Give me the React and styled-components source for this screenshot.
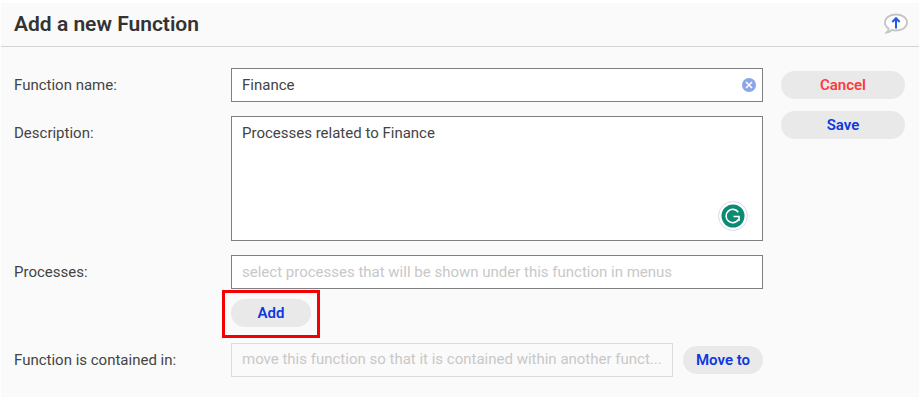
import React from "react";
import styled, { createGlobalStyle } from "styled-components";

const Global = createGlobalStyle`
  html, body { margin: 0; padding: 0; background: #fff; }
  body { font-family: Roboto, "Liberation Sans", sans-serif; }
  * { box-sizing: border-box; }
`;

const Panel = styled.div`
  margin: 3px 2px 0 1px;
  width: 918px;
  height: 394px;
  background: #fafafa;
`;

const Header = styled.header`
  height: 44px;
  padding: 0 10px 2px 13px;
  display: flex;
  align-items: center;
  justify-content: space-between;
  border-bottom: 1px solid #d4d4d4;
`;

const Title = styled.h1`
  margin: 0;
  font-size: 21px;
  line-height: 24px;
  font-weight: 600;
  color: #333;
`;

const Body = styled.div`
  padding: 21px 13px 0 13px;
  display: grid;
  grid-template-columns: 217px 532px 142px;
  align-items: start;
`;

const Label = styled.label`
  font-size: 15px;
  line-height: 18px;
  color: #444;
  padding-top: 8px;
`;

const Field = styled.div`
  position: relative;
  margin-bottom: 14px;
`;

const Input = styled.div`
  height: ${(p) => p.$h ?? 34}px;
  width: ${(p) => p.$w ?? "100%"};
  padding: ${(p) => p.$pad ?? 7}px 10px 0;
  background: ${(p) => (p.$disabled ? "#fafafa" : "#fff")};
  border: 1px solid ${(p) => (p.$disabled ? "#dcdcdc" : "#808080")};
  font-size: 15px;
  line-height: 18px;
  color: ${(p) => (p.$placeholder ? "#c8c8c8" : "#444")};
  white-space: nowrap;
  overflow: hidden;
`;

const ClearIcon = styled.svg`
  position: absolute;
  right: 6px;
  top: 9px;
  width: 16px;
  height: 16px;
`;

const GrammarlyIcon = styled.svg`
  position: absolute;
  right: 15px;
  bottom: 10px;
  width: 30px;
  height: 30px;
`;

const Actions = styled.div`
  grid-row: span 2;
  padding: 3px 0 0 18px;
  display: flex;
  flex-direction: column;
  gap: 12px;
`;

const Pill = styled.button`
  width: ${(p) => p.$w}px;
  height: 28px;
  flex: none;
  border: 0;
  padding: 0;
  border-radius: 14px;
  background: #e9e9e9;
  font-family: inherit;
  font-size: 15px;
  font-weight: 600;
  color: ${(p) => (p.$danger ? "#fb3a3f" : "#0f37e0")};
`;

const AddRow = styled.div`
  position: relative;
  width: 80px;
  height: 28px;
  margin: 10px 0 16px;
`;

const Highlight = styled.div`
  position: absolute;
  left: -9px;
  top: -9px;
  width: 98px;
  height: 48px;
  border: 3px solid #f40000;
`;

const MoveRow = styled.div`
  display: flex;
  align-items: center;
  gap: 10px;
`;

export default function App() {
  return (
    <>
      <Global />
      <Panel>
        <Header>
          <Title>Add a new Function</Title>
          <svg width="26" height="22" viewBox="0 0 26 22" fill="none">
            <path
              d="M13 1.500c6.300 0 11 3.500 11 8s-4.700 8-11 8c-1.500 0-3-.2-4.200-.6-1 1.200-2.600 2.300-5 2.600 1.200-1.100 1.800-2.400 1.900-4C3.200 14 2 11.900 2 9.500c0-4.500 4.700-8 11-8z"
              stroke="#c4c4c4"
              strokeWidth="1.800"
              fill="#fff"
            />
            <path d="M13 15.500V5.500M9.300 9l3.700-3.800 3.700 3.800" stroke="#1f5ce0" strokeWidth="2" />
          </svg>
        </Header>
        <Body>
          <Label>Function name:</Label>
          <Field>
            <Input>Finance</Input>
            <ClearIcon viewBox="0 0 16 16">
              <circle cx="8" cy="8" r="7" fill="#8aa5ec" />
              <path d="M5 5l6 6M11 5l-6 6" stroke="#fff" strokeWidth="1.600" />
            </ClearIcon>
          </Field>
          <Actions>
            <Pill $w={124} $danger>Cancel</Pill>
            <Pill $w={124}>Save</Pill>
          </Actions>
          <Label>Description:</Label>
          <Field>
            <Input $h={125}>Processes related to Finance</Input>
            <GrammarlyIcon viewBox="0 0 30 30">
              <circle cx="15" cy="15" r="14.500" fill="#fff" stroke="#d8dce6" />
              <circle cx="15" cy="15" r="11.500" fill="#0c8a72" />
              <path d="M20.300 11.200A6.700 6.700 0 1 0 20.500 18.500M15.500 15.500H21V20" fill="none" stroke="#fff" strokeWidth="1.600" />
            </GrammarlyIcon>
          </Field>
          <Label>Processes:</Label>
          <div>
            <Input $placeholder>select processes that will be shown under this function in menus</Input>
            <AddRow>
              <Pill $w={80}>Add</Pill>
              <Highlight />
            </AddRow>
          </div>
          <div />
          <Label>Function is contained in:</Label>
          <MoveRow>
            <Input $w="442px" $pad={6} $placeholder $disabled>move this function so that it is contained within another funct...</Input>
            <Pill $w={80}>Move to</Pill>
          </MoveRow>
        </Body>
      </Panel>
    </>
  );
}
